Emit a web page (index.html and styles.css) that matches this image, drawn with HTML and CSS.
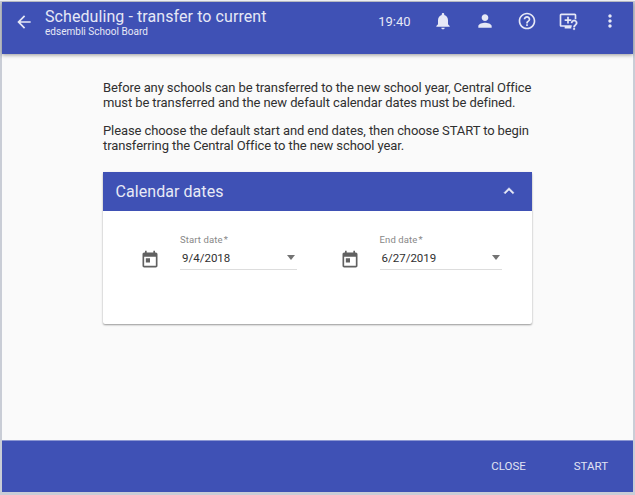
FILE: index.html
```html
<!DOCTYPE html>
<html lang="en">
<head>
<meta charset="utf-8">
<title>Scheduling - transfer to current</title>
<link rel="stylesheet" href="styles.css">
</head>
<body>
<div class="app">
  <header class="toolbar">
    <svg class="icon back" viewBox="0 0 24 24"><path d="M20 11H7.83l5.59-5.59L12 4l-8 8 8 8 1.410-1.410L7.830 13H20v-2z"/></svg>
    <div class="titles">
      <h1>Scheduling - transfer to current</h1>
      <p>edsembli School Board</p>
    </div>
    <div class="actions">
      <span class="clock">19:40</span>
      <svg class="icon" viewBox="0 0 24 24"><path d="M12 22c1.100 0 2-.9 2-2h-4c0 1.100.9 2 2 2zm6-6v-5c0-3.070-1.630-5.640-4.500-6.320V4c0-.83-.67-1.500-1.500-1.500s-1.500.67-1.500 1.500v.68C7.640 5.360 6 7.920 6 11v5l-2 2v1h16v-1l-2-2z"/></svg>
      <svg class="icon" viewBox="0 0 24 24"><path d="M12 12c2.210 0 4-1.790 4-4s-1.790-4-4-4-4 1.790-4 4 1.790 4 4 4zm0 2c-2.670 0-8 1.340-8 4v2h16v-2c0-2.660-5.330-4-8-4z"/></svg>
      <svg class="icon" viewBox="0 0 24 24"><path d="M11 18h2v-2h-2v2zm1-16C6.480 2 2 6.480 2 12s4.480 10 10 10 10-4.480 10-10S17.520 2 12 2zm0 18c-4.410 0-8-3.590-8-8s3.590-8 8-8 8 3.590 8 8-3.590 8-8 8zm0-14c-2.210 0-4 1.790-4 4h2c0-1.100.9-2 2-2s2 .9 2 2c0 2-3 1.750-3 5h2c0-2.250 3-2.500 3-5 0-2.210-1.790-4-4-4z"/></svg>
      <svg class="icon" viewBox="0 0 24 24"><path d="M22 10V5c0-1.100-.9-2-2-2H4c-1.100 0-2 .9-2 2v12c0 1.100.9 2 2 2h4v2h8v-2h.5v-2H4V5h16v5zM11 7v3H8v2h3v3h2v-3h3v-2h-3V7z"/><path d="M18.300 20.500h2v2h-2zM15.500 14.500h1.900c0-1.200.9-2.100 2-2.100s2 .9 2 2c0 1.900-3 1.900-3 5.100h1.900c0-2.200 3-2.600 3-5.200 0-2-1.700-3.700-3.900-3.700s-3.900 1.700-3.900 3.900z" stroke="currentColor" stroke-width=".3"/></svg>
      <svg class="icon" viewBox="0 0 24 24"><path d="M12 8c1.100 0 2-.9 2-2s-.9-2-2-2-2 .9-2 2 .9 2 2 2zm0 2c-1.100 0-2 .9-2 2s.9 2 2 2 2-.9 2-2-.9-2-2-2zm0 6c-1.100 0-2 .9-2 2s.9 2 2 2 2-.9 2-2-.9-2-2-2z"/></svg>
    </div>
  </header>
  <main class="content">
    <p class="intro">Before any schools can be transferred to the new school year, Central Office<br>must be transferred and the new default calendar dates must be defined.</p>
    <p class="intro">Please choose the default start and end dates, then choose START to begin<br>transferring the Central Office to the new school year.</p>
    <section class="card">
      <div class="card-header">
        <h2>Calendar dates</h2>
        <svg class="icon chevron" viewBox="0 0 24 24"><path d="M12 8l-6 6 1.410 1.410L12 10.830l4.590 4.580L18 14z" stroke="currentColor" stroke-width=".6"/></svg>
      </div>
      <div class="card-body">
        <div class="field">
          <svg class="icon event" viewBox="0 0 24 24"><path d="M19 3h-1V1h-2v2H8V1H6v2H5c-1.110 0-1.990.9-1.990 2L3 19c0 1.100.89 2 2 2h14c1.100 0 2-.9 2-2V5c0-1.100-.9-2-2-2zm0 16H5V8h14v11zM7 10h5v5H7z"/></svg>
          <div class="picker start">
            <label>Start date<span class="required">*</span></label>
            <div class="value"><span>9/4/2018</span><i class="caret"></i></div>
          </div>
        </div>
        <div class="field">
          <svg class="icon event" viewBox="0 0 24 24"><path d="M19 3h-1V1h-2v2H8V1H6v2H5c-1.110 0-1.990.9-1.990 2L3 19c0 1.100.89 2 2 2h14c1.100 0 2-.9 2-2V5c0-1.100-.9-2-2-2zm0 16H5V8h14v11zM7 10h5v5H7z"/></svg>
          <div class="picker end">
            <label>End date<span class="required">*</span></label>
            <div class="value"><span>6/27/2019</span><i class="caret"></i></div>
          </div>
        </div>
      </div>
    </section>
  </main>
  <footer class="footer">
    <button>CLOSE</button>
    <button>START</button>
  </footer>
</div>
</body>
</html>
```
FILE: styles.css
```css
* { box-sizing: border-box; margin: 0; padding: 0; }
body {
  width: 635px;
  height: 495px;
  overflow: hidden;
  padding: 1px 2px 3px;
  background: #c9cdd6;
  border-top: 1px solid #eceef2;
  font-family: Roboto, "Liberation Sans", sans-serif;
  color: #303030;
}
.app {
  display: flex;
  flex-direction: column;
  width: 631px;
  height: 490px;
  background: #fafafa;
}
.icon { display: block; width: 20px; height: 20px; fill: currentColor; flex: none; }
.toolbar {
  display: flex;
  align-items: flex-start;
  height: 52px;
  padding-left: 12px;
  background: #3f51b5;
  color: #e6e8f6;
  box-shadow: 0 1px 4px rgba(0, 0, 0, .4);
}
.back { margin-top: 10px; }
.titles { margin: 5px 0 0 11px; }
.titles h1 { font-size: 16px; line-height: 19px; font-weight: 400; letter-spacing: .08px; white-space: nowrap; }
.titles p { font-size: 10px; line-height: 11px; letter-spacing: .02px; }
.actions { display: flex; align-items: center; gap: 21.700px; height: 20px; margin: 9px 13px 0 auto; }
.clock { font-size: 13px; margin-right: 1px; }
.content { flex: 1; width: 430px; margin-left: 100px; padding-top: 26px; }
.intro { padding-left: 1px; font-size: 13px; line-height: 15px; letter-spacing: -.1px; white-space: nowrap; margin-bottom: 14px; }
.intro + .intro { margin-top: -1px; }
.card { width: 429.500px; margin: 19px 0 0 .5px; height: 152px; background: #fff; border-radius: 2px; box-shadow: 0 1px 2px rgba(0, 0, 0, .4); }
.card-header {
  display: flex;
  align-items: center;
  justify-content: space-between;
  height: 38.500px;
  padding: 0 13px 0 13px;
  background: #3f51b5;
  color: #e8eaf6;
}
.card-header h2 { font-size: 16px; font-weight: 400; letter-spacing: .06px; }
.card-body { display: flex; padding: 23.500px 0 0 37.500px; }
.field { display: flex; flex: none; width: 199.500px; }
.event { margin-top: 16px; color: #616161; }
.picker { margin-left: 20px; }
.start { width: 117px; }
.end { width: 122px; }
label { display: block; font-size: 9.500px; line-height: 12px; letter-spacing: .12px; color: #888; }
.required { margin-left: 1px; }
.value {
  display: flex;
  align-items: center;
  justify-content: space-between;
  height: 24px;
  padding: 0 2px;
  border-bottom: 1px solid #ddd;
  font-size: 11.500px;
}
.caret { border: 4px solid transparent; border-top: 5px solid #737373; border-bottom: 0; }
.footer {
  display: flex;
  justify-content: flex-end;
  align-items: center;
  gap: 48px;
  height: 52px;
  padding: 0 25px 2px 0;
  border-top: 1px solid #8c97d2;
  background: #3f51b5;
}
.footer button { border: 0; background: none; color: #e0e3f3; font: 400 11.500px Roboto, "Liberation Sans", sans-serif; }
```
